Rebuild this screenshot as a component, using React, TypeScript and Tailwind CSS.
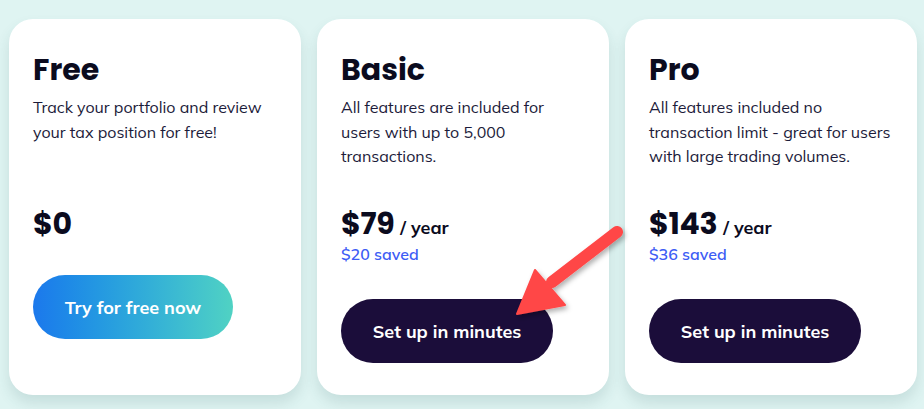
import React from "react";

interface Plan {
  name: string;
  description: string;
  price: string;
  period?: string;
  saved?: string;
  cta: string;
  gradient?: boolean;
}

const plans: Plan[] = [
  {
    name: "Free",
    description: "Track your portfolio and review your tax position for free!",
    price: "$0",
    cta: "Try for free now",
    gradient: true,
  },
  {
    name: "Basic",
    description: "All features are included for users with up to 5,000 transactions.",
    price: "$79",
    period: "/ year",
    saved: "$20 saved",
    cta: "Set up in minutes",
  },
  {
    name: "Pro",
    description: "All features included no transaction limit - great for users with large trading volumes.",
    price: "$143",
    period: "/ year",
    saved: "$36 saved",
    cta: "Set up in minutes",
  },
];

const headingFont = "font-['Poppins','Inter','Liberation_Sans',sans-serif]";
const bodyFont = "font-['Mulish','Lato','Noto_Sans',sans-serif]";

const PlanCard: React.FC<{ plan: Plan }> = ({ plan }) => {
  return (
    <div className="w-[292px] h-[376px] shrink-0 rounded-[24px] bg-white px-6 pt-[33px] shadow-[0_8px_14px_rgba(40,90,90,0.14)]">
      <h2 className={`${headingFont} text-[30px] leading-[36px] font-bold text-[#0b0b1e]`}>
        {plan.name}
      </h2>
      {/* Description keeps 3 lines of room */}
      <p className={`${bodyFont} mt-[7px] h-[73px] text-[16px] leading-[24.5px] text-[#1c1b3a]`}>
        {plan.description}
      </p>
      <div className="mt-[38px] flex items-baseline gap-[6px]">
        <span className={`${headingFont} text-[30px] leading-[36px] font-bold text-[#0b0b1e] tracking-[-0.3px]`}>
          {plan.price}
        </span>
        {plan.period && (
          <span className={`${bodyFont} text-[18px] font-bold text-[#0b0b1e]`}>{plan.period}</span>
        )}
      </div>
      {plan.saved && (
        <div className={`${bodyFont} text-[16px] leading-[24px] font-semibold text-[#3d5cf5]`}>{plan.saved}</div>
      )}
      <button
        className={`${bodyFont} mt-[33px] h-16 rounded-full text-[18px] font-bold text-white ${
          plan.gradient
            ? "w-[200px] bg-gradient-to-r from-[#1c78ec] to-[#50d2c3]"
            : "w-[212px] bg-[#1b0d3a]"
        }`}
      >
        {plan.cta}
      </button>
    </div>
  );
};

export default function App() {
  return (
    <div className="relative w-[924px] h-[409px] overflow-hidden bg-[#dff4f2]">
      <div className="flex gap-4 pl-[9px] pt-[19px]">
        {plans.map((p) => (
          <PlanCard key={p.name} plan={p} />
        ))}
      </div>

      {/* Annotation arrow */}
      <svg
        className="absolute left-0 top-0 pointer-events-none"
        width="924"
        height="409"
        viewBox="0 0 924 409"
      >
        <defs>
          <filter id="sh" x="-20%" y="-20%" width="140%" height="140%">
            <feDropShadow dx="2" dy="3" stdDeviation="2.5" floodColor="#000" floodOpacity="0.3" />
          </filter>
        </defs>
        <g filter="url(#sh)" fill="#ff4747" stroke="#ff4747">
          <line x1="617" y1="232" x2="552" y2="282" strokeWidth="12" strokeLinecap="round" />
          <polygon points="517,314 535,270 565,305" strokeWidth="2" strokeLinejoin="round" />
        </g>
      </svg>
    </div>
  );
}
